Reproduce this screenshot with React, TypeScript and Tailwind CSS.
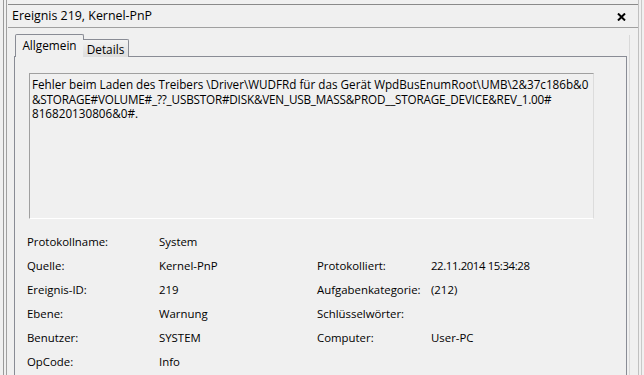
import React from "react";

const rows: [string, string, string, string][] = [
  ["Protokollname:", "System", "", ""],
  ["Quelle:", "Kernel-PnP", "Protokolliert:", "22.11.2014 15:34:28"],
  ["Ereignis-ID:", "219", "Aufgabenkategorie:", "(212)"],
  ["Ebene:", "Warnung", "Schlüsselwörter:", ""],
  ["Benutzer:", "SYSTEM", "Computer:", "User-PC"],
  ["OpCode:", "Info", "", ""],
];

export default function App() {
  return (
    <div className="w-[644px] h-[375px] bg-[#f0f0f0] overflow-hidden flex text-[11.4px] text-black font-['Open_Sans','Noto_Sans',sans-serif]">
      {/* left frame lines */}
      <div className="w-[3px]" />
      <div className="w-px bg-[#9a9a9a]" />
      <div className="w-[2px]" />
      <div className="w-px bg-[#a0a0a0]" />
      <div className="w-px" />

      {/* main column */}
      <div className="w-[630px] flex flex-col">
        {/* title bar */}
        <div className="mt-[4px] h-[24px] border-t border-b border-t-[#8a8a8a] border-b-[#a0a0a0] flex items-center pl-[4px] pr-[12px]">
          <span className="whitespace-nowrap leading-none text-[12.4px]">Ereignis 219, Kernel-PnP</span>
          <div className="flex-1" />
          <svg width="9" height="8" viewBox="0 0 9 8" className="mt-[1px]">
            <path d="M1 0.5 L8 7.5 M8 0.5 L1 7.5" stroke="#000" strokeWidth="2" />
          </svg>
        </div>

        {/* content row */}
        <div className="flex flex-1 mt-[7px]">
          <div className="w-[6px]" />
          <div className="w-[613px] flex flex-col">
            {/* tabs */}
            <div className="flex items-end h-[22px] -mb-px ml-px relative z-10">
              <div className="h-[23px] w-[69px] border border-b-0 border-[#898c95] bg-[#f0f0f0] flex items-start justify-center pt-[2px] rounded-t-[2px]">
                <span className="leading-[16px] text-[11.8px]">Allgemein</span>
              </div>
              <div className="h-[18px] w-[46px] -ml-px border border-l-0 border-b-0 border-[#898c95] bg-gradient-to-b from-[#f3f3f3] to-[#dddddd] flex items-start justify-center pt-[1px] rounded-tr-[2px]">
                <span className="leading-[16px] text-[11.8px]">Details</span>
              </div>
            </div>
            {/* panel */}
            <div className="flex-1 border-t border-l border-r border-[#898c95] flex flex-col">
              <div className="mt-[16px] ml-[14px] w-[565px] h-[146px] border-t border-l border-t-[#a0a0a0] border-l-[#a0a0a0] border-r border-b border-r-[#dcdcdc] border-b-[#ffffff] pl-[2px] pt-[3px] flex flex-col text-[11.7px]">
                <div className="h-[14.5px] leading-[14.5px] whitespace-nowrap">
                  Fehler beim Laden des Treibers \Driver\WUDFRd für das Gerät WpdBusEnumRoot\UMB\2&amp;37c186b&amp;0
                </div>
                <div className="h-[14.5px] leading-[14.5px] whitespace-nowrap tracking-[-0.18px]">
                  &amp;STORAGE#VOLUME#_??_USBSTOR#DISK&amp;VEN_USB_MASS&amp;PROD__STORAGE_DEVICE&amp;REV_1.00#
                </div>
                <div className="h-[14.5px] leading-[14.5px] whitespace-nowrap">
                  816820130806&amp;0#.
                </div>
              </div>
              <div className="mt-[11px] ml-[12px] flex flex-col">
                {rows.map((r, i) => (
                  <div key={i} className="h-[24px] flex items-center whitespace-nowrap">
                    <div className="w-[132px]">{r[0]}</div>
                    <div className="w-[158px]">{r[1]}</div>
                    <div className="w-[114px]">{r[2]}</div>
                    <div className={i === 1 ? "tracking-[-0.4px]" : ""}>{r[3]}</div>
                  </div>
                ))}
              </div>
            </div>
          </div>
          <div className="w-[2px]" />
          <div className="w-px bg-[#d9d9d9]" />
        </div>
      </div>

      {/* right frame lines */}
      <div className="w-px bg-[#c0c0c0]" />
      <div className="w-[2px]" />
      <div className="w-px bg-[#c8c8c8]" />
      <div className="flex-1" />
    </div>
  );
}
